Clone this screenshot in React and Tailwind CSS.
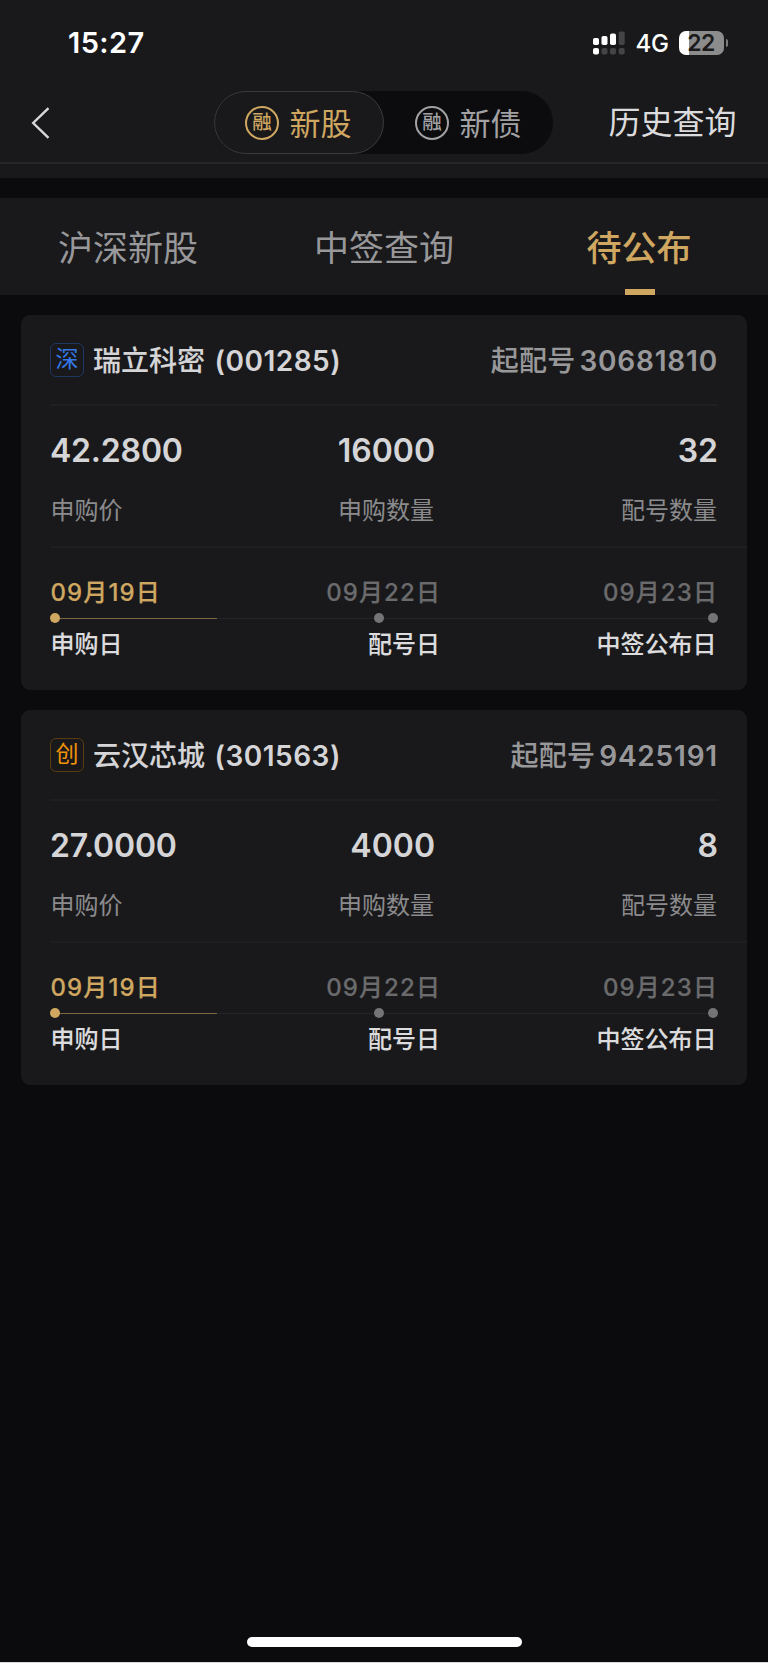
import React, { useState } from 'react';

const stocks = [
  {
    market: '深',
    marketStyle: 'border-[#1f3762] text-[#3577e5]',
    name: '瑞立科密',
    code: '001285',
    startNo: '30681810',
    price: '42.2800',
    amount: '16000',
    count: '32',
  },
  {
    market: '创',
    marketStyle: 'border-[#5a3c12] text-[#f39406]',
    name: '云汉芯城',
    code: '301563',
    startNo: '9425191',
    price: '27.0000',
    amount: '4000',
    count: '8',
  },
];

const tabs = ['沪深新股', '中签查询', '待公布'];

const Signal = () => (
  <svg width="32" height="24" viewBox="0 0 32 24">
    <rect x="0" y="7" width="6" height="7" rx="1.8" fill="#fff" />
    <rect x="8.5" y="5" width="6" height="9" rx="1.8" fill="#fff" />
    <rect x="17" y="2.5" width="6" height="11.5" rx="1.8" fill="#fff" />
    <rect x="25.7" y="0.5" width="6" height="13.5" rx="1.8" fill="#444446" />
    <rect x="0" y="17" width="6" height="6.5" rx="2" fill="#fff" />
    <rect x="8.5" y="17" width="6" height="6.5" rx="2" fill="#444446" />
    <rect x="17" y="17" width="6" height="6.5" rx="2" fill="#444446" />
    <rect x="25.7" y="17" width="6" height="6.5" rx="2" fill="#444446" />
  </svg>
);

const Battery = () => (
  <div className="flex items-center">
    <div className="flex h-6 w-[45px] items-center justify-center rounded-[7px] bg-linear-to-r from-white from-[10px] to-[#8c8c8d] to-[10px] text-[23px] leading-6 font-semibold tracking-[-0.6px] text-[#1b1b1c]">
      22
    </div>
    <div className="ml-[2px] h-2 w-[2.5px] rounded-r-full bg-[#7c7c7d]" />
  </div>
);

const StatusBar = () => (
  <div className="flex h-[85px] items-center justify-between pr-10 pl-[68px] text-white">
    <span className="text-[29px] leading-[36px] font-semibold tracking-[0.4px]">15:27</span>
    <div className="flex items-center">
      <Signal />
      <span className="mt-[2px] mr-[10px] ml-[11px] text-[24px] leading-7 font-medium tracking-[-0.4px]">4G</span>
      <Battery />
    </div>
  </div>
);

const Rong = () => (
  <span className="flex size-[34px] items-center justify-center rounded-full border-2 border-current text-[19.5px] leading-none font-medium">
    融
  </span>
);

const NavBar = () => {
  const [kind, setKind] = useState('stock');

  return (
    <div className="flex h-[79px] items-center border-b-2 border-[#272729] pb-[2px]">
      <button className="flex w-[214px] items-center pl-[31px]">
        <svg width="20" height="32" viewBox="0 0 20 32" fill="none" stroke="#d8d8da" strokeWidth="2.4">
          <path d="M17.5 1.2 2.2 16l15.3 14.8" />
        </svg>
      </button>
      <div className="flex h-[63px] w-[339px] rounded-full bg-[#0c0c0e]">
        <button
          onClick={() => setKind('stock')}
          className={`flex w-[170px] items-center rounded-full border pl-[30px] text-[31px] leading-none ${
            kind === 'stock' ? 'border-[#3b3b3d] bg-[#19191b] text-[#cfa761]' : 'border-transparent text-[#a2a2a4]'
          }`}
        >
          <Rong />
          <span className="mt-[2px] ml-[10.5px]">新股</span>
        </button>
        <button
          onClick={() => setKind('bond')}
          className={`flex w-[169px] items-center rounded-full border pl-[30px] text-[31px] leading-none ${
            kind === 'bond' ? 'border-[#3b3b3d] bg-[#19191b] text-[#cfa761]' : 'border-transparent text-[#a2a2a4]'
          }`}
        >
          <Rong />
          <span className="mt-[2px] ml-[10.5px]">新债</span>
        </button>
      </div>
      <button className="mt-px ml-[55.5px] text-[32px] leading-none text-[#dcdcde]">历史查询</button>
    </div>
  );
};

const Tabs = () => {
  const [active, setActive] = useState('待公布');

  return (
    <div className="grid h-[97px] grid-cols-3 bg-[#19191b]">
      {tabs.map((tab) => (
        <button
          key={tab}
          onClick={() => setActive(tab)}
          className={`relative flex items-center justify-center pt-[3px] text-[35px] leading-none ${
            active === tab ? 'pr-[2px] font-medium text-[#cfa761]' : 'text-[#98989a]'
          }`}
        >
          {tab}
          {active === tab && <span className="absolute bottom-0 left-[113px] h-[6px] w-[30px] bg-[#cfa761]" />}
        </button>
      ))}
    </div>
  );
};

const StockCard = ({ stock }) => (
  <div className="flex h-[375px] flex-col rounded-[9px] bg-[#19191b] pl-[29px]">
    <div className="mr-[29px] flex h-[91px] items-center border-b-2 border-[#1f1f21] text-[28px] leading-[34px] font-medium">
      <span
        className={`flex size-[34px] items-center justify-center rounded-[6px] border text-[23px] leading-none font-normal ${stock.marketStyle}`}
      >
        {stock.market}
      </span>
      <span className="mt-[2px] ml-[9px] text-[#d5d5d7] [-webkit-text-stroke:0.1px]">{stock.name}</span>
      <span className="mt-[2px] ml-[9.5px] font-semibold tracking-[0.5px] text-[#d5d5d7]">({stock.code})</span>
      <span className="mt-[2px] ml-auto tracking-[0.2px] text-[#98989a] [-webkit-text-stroke:0.1px]">起配号</span>
      <span className="mt-[2px] ml-1 font-semibold tracking-[0.8px] text-[#98989a]">{stock.startNo}</span>
    </div>

    <div className="h-[142px] border-b-2 border-[#1e1e20]">
      <div className="grid grid-cols-[192px_193px_283px] pt-[28px] text-[32px] leading-[34px] font-semibold text-[#d5d5d7]">
        <span className="tracking-[-0.2px]">{stock.price}</span>
        <span className="text-right">{stock.amount}</span>
        <span className="text-right">{stock.count}</span>
      </div>
      <div className="mt-[31px] grid grid-cols-[192px_192px_283px] text-[24px] leading-[24px] text-[#8b8b8d]">
        <span className="pl-[0.5px]">申购价</span>
        <span className="text-right">申购数量</span>
        <span className="text-right">配号数量</span>
      </div>
    </div>

    {/* Timeline */}
    <div className="pt-[30px]">
      <div className="grid grid-cols-[190px_201px_277px] text-[24px] leading-[30px] font-medium tracking-[1.1px] text-[#6b6b6d] [-webkit-text-stroke:0.2px]">
        <span className="pl-[0.5px] text-[#cfa761]">09月19日</span>
        <span className="text-right">09月22日</span>
        <span className="text-right">09月23日</span>
      </div>
      <div className="mt-[5px] flex h-[10px] w-[668px] items-center">
        <span className="size-[10px] rounded-full bg-[#cfa761]" />
        <span className="h-px w-[157px] bg-[#7d673f]" />
        <span className="h-px w-[157px] bg-[#242426]" />
        <span className="size-[10px] rounded-full bg-[#747476]" />
        <span className="h-px flex-1 bg-[#242426]" />
        <span className="size-[10px] rounded-full bg-[#747476]" />
      </div>
      <div className="mt-[8px] grid grid-cols-[190px_200px_276.5px] text-[24px] leading-[28px] font-medium text-[#dcdcde] [-webkit-text-stroke:0.1px]">
        <span className="pl-[0.5px]">申购日</span>
        <span className="text-right">配号日</span>
        <span className="text-right">中签公布日</span>
      </div>
    </div>
  </div>
);

const App = () => {
  return (
    <div className="flex h-[1663px] w-[768px] flex-col overflow-hidden border-b border-[#d9d9db] bg-[#0b0b0d] font-['Inter','Noto_Sans_CJK_SC',sans-serif] whitespace-nowrap">
      <div className="h-[178px] bg-[#19191b]">
        <StatusBar />
        <NavBar />
      </div>
      <div className="mt-5">
        <Tabs />
      </div>
      <div className="mt-5 flex flex-col gap-5 px-[21px]">
        {stocks.map((stock) => (
          <StockCard key={stock.code} stock={stock} />
        ))}
      </div>
      <div className="mx-auto mt-auto mb-[15px] h-[10px] w-[275px] rounded-full bg-white" />
    </div>
  );
};

export default App;
